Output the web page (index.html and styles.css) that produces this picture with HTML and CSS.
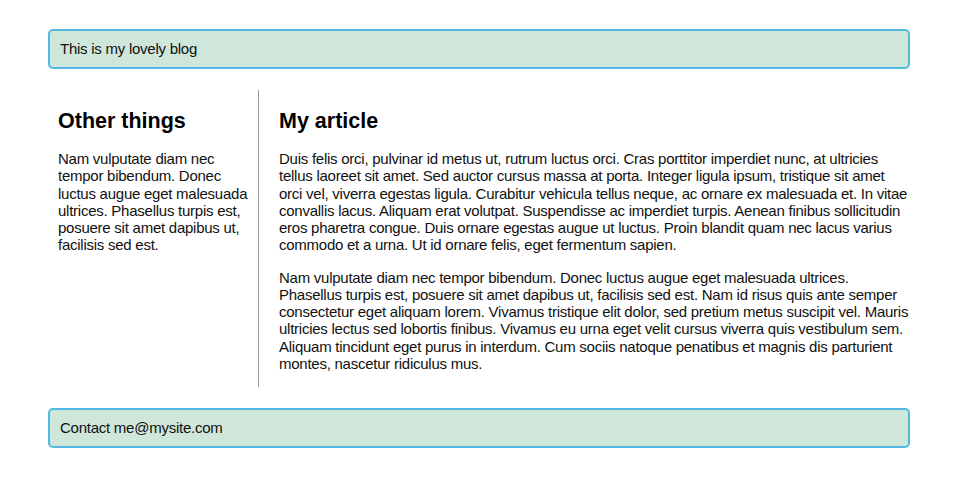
FILE: index.html
```html
<!DOCTYPE html>
<html lang="en">
<head>
<meta charset="utf-8">
<title>My lovely blog</title>
<link rel="stylesheet" href="styles.css">
</head>
<body>
<div class="page">
  <header class="banner">This is my lovely blog</header>
  <main class="main">
    <aside class="sidebar">
      <h2>Other things</h2>
      <p>Nam vulputate diam nec tempor bibendum. Donec luctus augue eget malesuada ultrices. Phasellus turpis est, posuere sit amet dapibus ut, facilisis sed est.</p>
    </aside>
    <article class="article">
      <h2>My article</h2>
      <p>Duis felis orci, pulvinar id metus ut, rutrum luctus orci. Cras porttitor imperdiet nunc, at ultricies tellus laoreet sit amet. Sed auctor cursus massa at porta. Integer ligula ipsum, tristique sit amet orci vel, viverra egestas ligula. Curabitur vehicula tellus neque, ac ornare ex malesuada et. In vitae convallis lacus. Aliquam erat volutpat. Suspendisse ac imperdiet turpis. Aenean finibus sollicitudin eros pharetra congue. Duis ornare egestas augue ut luctus. Proin blandit quam nec lacus varius commodo et a urna. Ut id ornare felis, eget fermentum sapien.</p>
      <p>Nam vulputate diam nec tempor bibendum. Donec luctus augue eget malesuada ultrices. Phasellus turpis est, posuere sit amet dapibus ut, facilisis sed est. Nam id risus quis ante semper consectetur eget aliquam lorem. Vivamus tristique elit dolor, sed pretium metus suscipit vel. Mauris ultricies lectus sed lobortis finibus. Vivamus eu urna eget velit cursus viverra quis vestibulum sem. Aliquam tincidunt eget purus in interdum. Cum sociis natoque penatibus et magnis dis parturient montes, nascetur ridiculus mus.</p>
    </article>
  </main>
  <footer class="banner">Contact me@mysite.com</footer>
</div>
</body>
</html>
```

FILE: styles.css
```css
html, body {
  margin: 0;
  padding: 0;
  background: #ffffff;
}

body {
  font-family: "Liberation Sans", Arial, sans-serif;
  font-size: 15px;
  line-height: 17.25px;
  color: #111111;
  letter-spacing: -0.25px;
}

.page {
  width: 862px;
  margin: 0 auto;
  padding: 29px 0;
  display: flex;
  flex-direction: column;
  gap: 21px;
}

.banner {
  border: 2px solid #52b9e3;
  border-radius: 5px;
  background: #cfe7db;
  padding: 9.4px 10px;
}

.main {
  display: flex;
  align-items: stretch;
}

.sidebar {
  width: 192px;
  flex: none;
  padding: 0 8px 0 10px;
  border-right: 1px solid #9a9a9a;
}

.article {
  flex: 1;
  padding: 0 0 0 20px;
}

h2 {
  font-size: 21.5px;
  line-height: 24px;
  font-weight: bold;
  color: #000000;
  letter-spacing: 0;
  margin: 19px 0 17px;
}

p {
  margin: 15px 0;
}
```
